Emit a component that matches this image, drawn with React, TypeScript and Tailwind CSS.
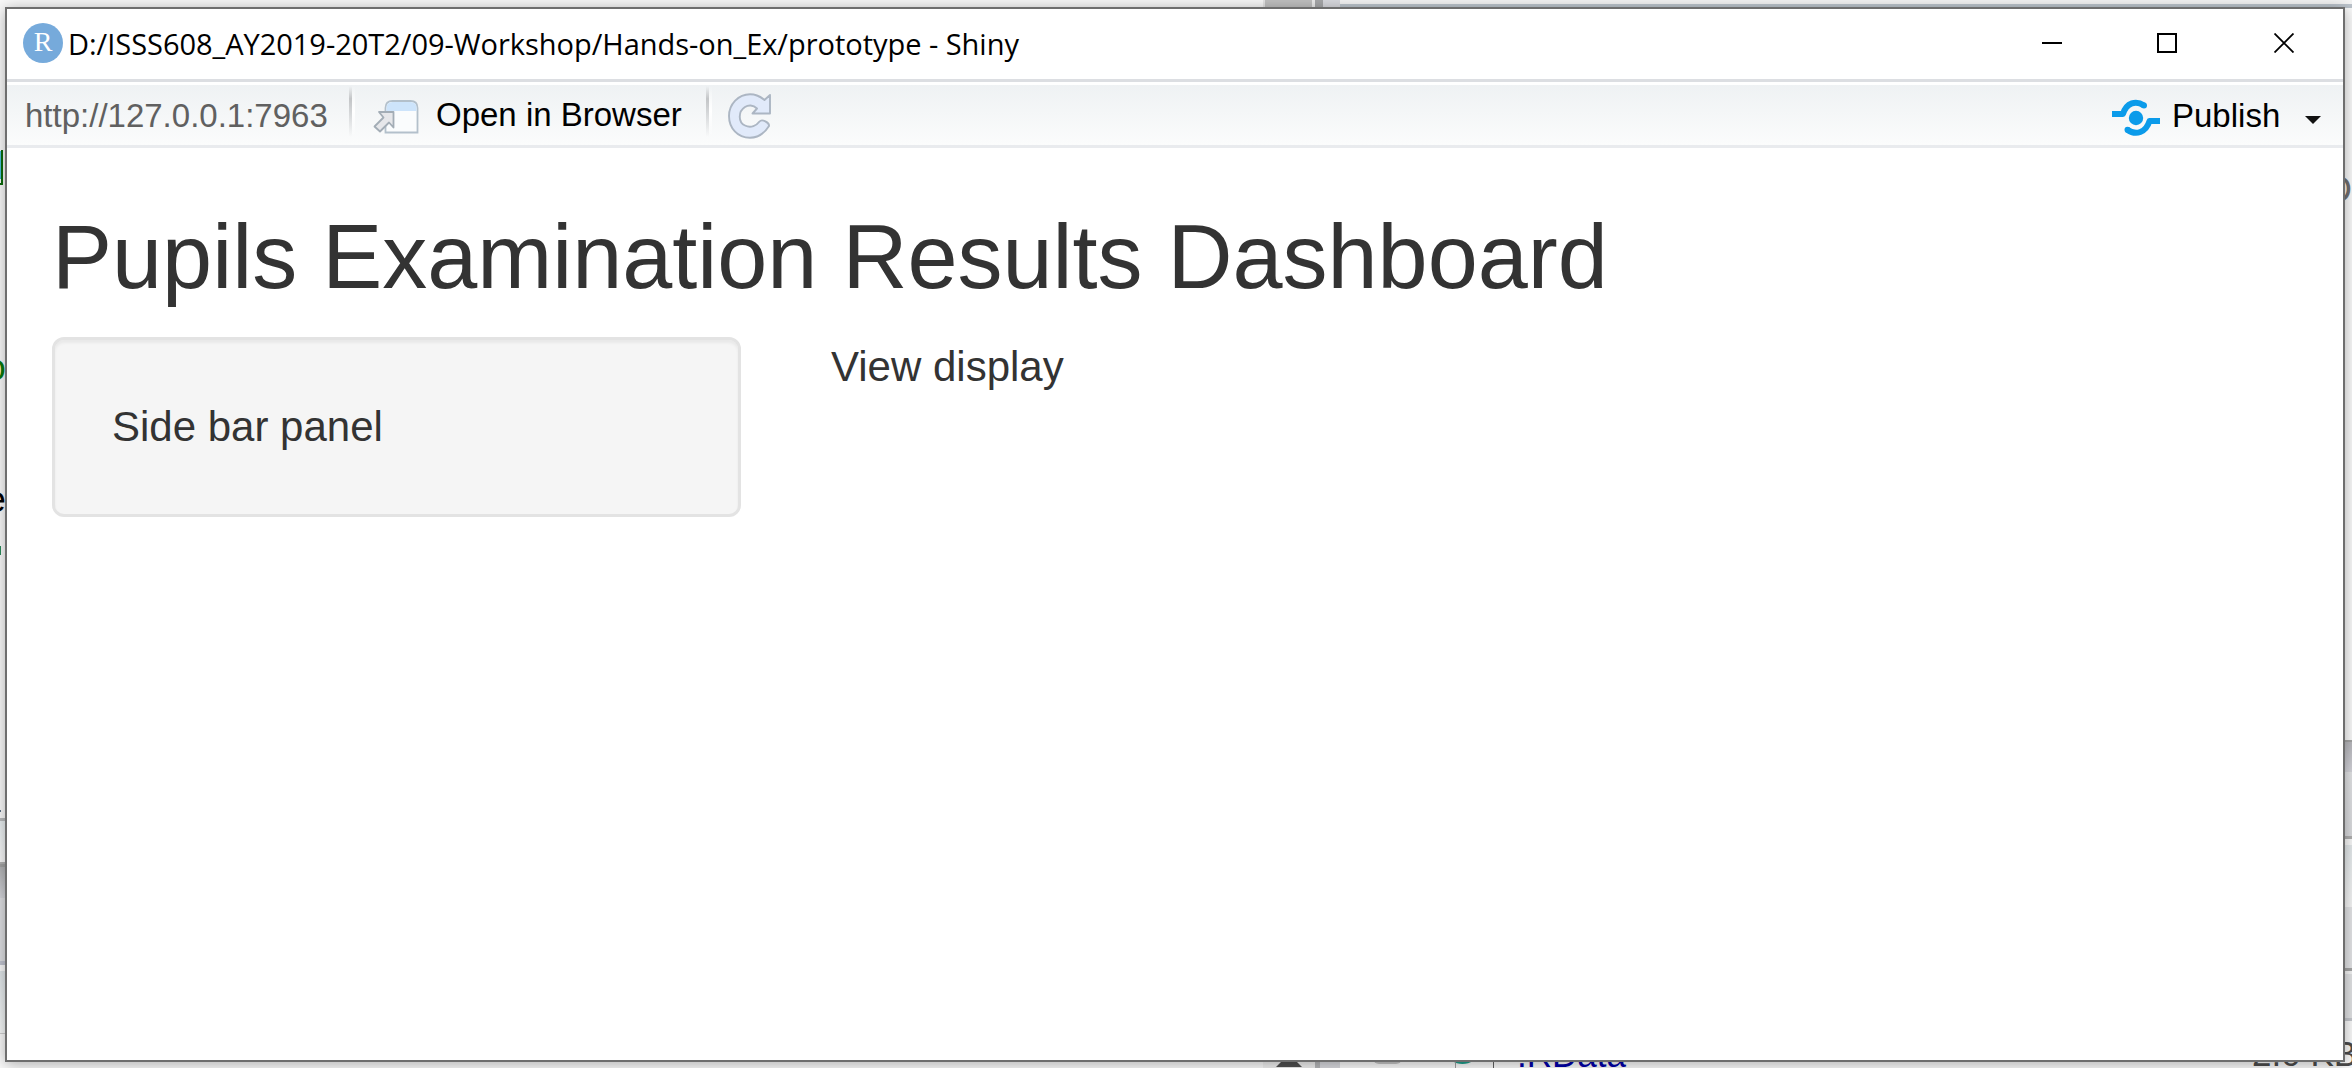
import React from 'react';

/* Parts of the editor that stay visible around the window */
function Backdrop() {
  return (
    <div className="absolute inset-0 overflow-hidden bg-[#fafafa]" aria-hidden="true">
      {/* top edge */}
      <div className="absolute left-0 top-0 flex h-[9px] w-full">
        <div className="w-[1263px] bg-[#f8f8f8]" />
        <div className="w-[2px] bg-[#e4e4e4]" />
        <div className="w-[47px] bg-[#c0c0c0]" />
        <div className="w-[3px] bg-[#ececec]" />
        <div className="w-[8px] bg-[#a6a7a9]" />
        <div className="w-[17px] bg-[#d8d9de]" />
        <div className="h-2 flex-1 border-b-[4px] border-[#bcc4cc] bg-[#f4f4f4]" />
      </div>

      {/* left edge */}
      <div className="absolute left-0 top-[818px] flex w-5 flex-col">
        <div className="h-[3px] bg-[#b9bbbd]" />
        <div className="h-[41px] bg-gradient-to-b from-[#e8eef0] to-[#fafafa]" />
        <div className="h-[2px] bg-[#b4b4b4]" />
        <div className="h-[3px] bg-[#a2a2a2]" />
        <div className="h-[31px] bg-gradient-to-b from-[#b2b3b5] to-[#d4d5da]" />
        <div className="h-[63px] bg-[#dedfe2]" />
        <div className="h-[4px] bg-[#c1c4d0]" />
        <div className="h-[6px] bg-[#fafafa]" />
        <div className="h-[62px] bg-gradient-to-b from-[#dfe5e8] to-[#f6f8f8]" />
        <div className="h-px bg-[#cfcfcf]" />
      </div>
      <div className="absolute -left-[19px] top-[144px] font-['Liberation_Mono',monospace] text-[38px] leading-[50px] text-[#0a6a0a]">d</div>
      <div className="absolute left-0 top-[150px] h-[35px] w-[3px] border-b-2 border-r-2 border-[#0a6a0a]" />
      <div className="absolute -left-[15px] top-[346px] font-['Liberation_Mono',monospace] text-[36px] leading-[50px] text-[#0a7a0a]">o</div>
      <div className="absolute -left-[15px] top-[478px] font-['Liberation_Mono',monospace] text-[36px] leading-[50px] text-black">e</div>
      <div className="absolute left-0 top-[546px] h-[9px] w-px bg-[#2a8a5a]" />
      <div className="absolute left-0 top-[810px] h-[2px] w-px bg-[#5f7186]" />

      {/* right edge */}
      <div className="absolute right-0 top-[740px] flex w-5 flex-col">
        <div className="h-[2px] bg-[#a5a5a5]" />
        <div className="h-[30px] bg-gradient-to-b from-[#b8b8bd] to-[#d4d4da]" />
        <div className="h-[64px] bg-gradient-to-b from-[#e2e3e5] to-[#dadbde]" />
        <div className="h-[3px] bg-[#b0b0b0]" />
        <div className="h-[6px] bg-[#f8f8f8]" />
        <div className="h-[62px] bg-gradient-to-b from-[#e3e8ea] to-[#f6f6f6]" />
        <div className="h-[61px] bg-[#e3e4e6]" />
        <div className="h-[3px] bg-[#a5a5a5]" />
        <div className="h-[3px] bg-[#f4f4f4]" />
        <div className="h-[44px] bg-[#e1e2e4]" />
        <div className="h-[3px] bg-[#c5c7cc]" />
      </div>
      <div className="absolute right-0 top-[165px] text-[37px] leading-[50px] text-[#707070]">D</div>

      {/* bottom edge */}
      <div className="absolute bottom-0 left-[1263px] flex h-2">
        <div className="w-[52px] bg-[#efefef]" />
        <div className="w-[5px] bg-[#b5b6b8]" />
        <div className="w-[20px] bg-[#d8d9de]" />
      </div>
      <svg className="absolute left-[1276px] top-[1055px]" width="26" height="12" viewBox="0 0 26 12">
        <path d="M0 12L13 -1L26 12Z" fill="#505050" />
      </svg>
      <div className="absolute left-[1373px] top-[1050px] h-[14px] w-[29px] rounded-md bg-[#c4c4c4]" />
      <div className="absolute left-[1448px] top-[1044px] h-5 w-[29px] rounded-[50%] bg-[#1ea08c]" />
      <div className="absolute left-[1455px] top-[1060px] h-2 w-px bg-[#a0a0a0]" />
      <div className="absolute left-[1493px] top-[1060px] h-2 w-px bg-[#606060]" />
      <div className="absolute left-[1517px] top-[1036px] text-[35px] leading-[38px] text-[#0000a8]">.RData</div>
      <div className="absolute left-[2252px] top-[1035px] whitespace-nowrap text-[35px] leading-[38px] text-[#4c4c4c]">2.0 KB</div>
    </div>
  );
}

function Separator() {
  return (
    <div className="mt-1 flex h-[51px] w-[6px]">
      <div className="w-[3px] bg-gradient-to-b from-transparent from-0% via-[#c3c5c7] via-25% to-transparent to-100%" />
      <div className="w-[3px] bg-gradient-to-b from-transparent via-white to-transparent" />
    </div>
  );
}

function OpenIcon() {
  return (
    <svg width="46" height="36" viewBox="0 0 46 36" className="block">
      <path d="M12.500 33.500V9Q12.500 2 19.500 2H37.500Q44.500 2 44.500 9V33.500Z" fill="#fafcfd" stroke="#b3c0cb" strokeWidth="1.800" />
      <path d="M13.500 12V9Q13.500 3 19.500 3H37.500Q43.500 3 43.500 9V12Z" fill="#cde4fb" />
      <path d="M6 13H20.500V28.500L16 23.500L7 32.500L1.500 27.500L10.500 18.500Z" fill="#e6e7ea" stroke="#a3adb6" strokeWidth="1.800" strokeLinejoin="round" />
    </svg>
  );
}

function RefreshIcon() {
  return (
    <svg width="44" height="46" viewBox="0 0 44 46" className="block">
      <path
        d="M42 2V20.500H24.500L29 15.500C25 11.500 20 12 17 14C10 18.500 10 29 17 32.500C23 35.500 28.500 32.500 31.500 28.500C34 25.500 41.500 29.500 41 33C36 41 29.500 44.800 22 44.800C9.500 44.800 1 35 1 23C1 11 10.500 1.200 22 1.200C28 1.200 32.500 3.500 36.500 7Z"
        fill="#e1eafa"
        stroke="#acb6c3"
        strokeWidth="1.900"
        strokeLinejoin="round"
      />
    </svg>
  );
}

function PublishIcon() {
  return (
    <svg width="48" height="38" viewBox="0 0 48 38" className="block" fill="none" stroke="#0b9bea" strokeWidth="6">
      <circle cx="24" cy="19" r="7.200" fill="#0b9bea" stroke="none" />
      <path d="M0 15H11C14.500 3.500 24 1 32 6.500" strokeLinejoin="round" />
      <path d="M48 22H37.500C34 33.500 24 37 15 30.500" strokeLinejoin="round" />
      <circle cx="32" cy="6.500" r="3" fill="#0b9bea" stroke="none" />
      <circle cx="15.500" cy="30.800" r="3" fill="#0b9bea" stroke="none" />
    </svg>
  );
}

function TitleBar() {
  return (
    <header className="flex h-[70px] shrink-0 items-center pb-[2px]">
      <span className="ml-4 flex size-10 items-center justify-center rounded-full bg-[#76aadb] pb-[2px] font-['Liberation_Serif',serif] text-[28px] leading-none text-white">
        R
      </span>
      <h1 className="ml-[5px] mt-[2px] whitespace-nowrap font-['Open_Sans',sans-serif] text-[29px] tracking-[-0.03px] text-black">
        D:/ISSS608_AY2019-20T2/09-Workshop/Hands-on_Ex/prototype - Shiny
      </h1>
      <div className="ml-auto mr-[49px] flex items-center">
        <svg width="20" height="20" viewBox="0 0 20 20" className="mr-[95px]">
          <path d="M0 10H20" stroke="#000" strokeWidth="2" />
        </svg>
        <svg width="20" height="20" viewBox="0 0 20 20" className="mr-[97px]">
          <path d="M1 1H19V19H1Z" fill="none" stroke="#000" strokeWidth="2" />
        </svg>
        <svg width="20" height="20" viewBox="0 0 20 20">
          <path d="M0.500 0.500L19.500 19.500M19.500 0.500L0.500 19.500" stroke="#000" strokeWidth="1.800" />
        </svg>
      </div>
    </header>
  );
}

function Toolbar() {
  return (
    <div className="flex h-[69px] shrink-0 items-start border-y-[3px] border-t-[#dcdee2] border-b-[#e9ebee] bg-gradient-to-b from-[#eef1f3] to-[#fbfcfc] text-[33px] leading-[38px] text-black shadow-[inset_0_3px_0_#fff]">
      <span className="ml-[18px] mt-[15px] w-[302px] whitespace-nowrap text-[#606060]">http://127.0.0.1:7963</span>
      <div className="ml-[22px] flex">
        <Separator />
      </div>
      <div className="ml-[18px] mt-[17px]">
        <OpenIcon />
      </div>
      <span className="ml-[17px] mt-[14px] w-[246px] whitespace-nowrap">Open in Browser</span>
      <div className="ml-6 flex">
        <Separator />
      </div>
      <div className="ml-4 mt-[11px]">
        <RefreshIcon />
      </div>
      <div className="ml-auto mt-[17px]">
        <PublishIcon />
      </div>
      <span className="ml-3 mt-[15px] w-[108px]">Publish</span>
      <svg width="16" height="8" viewBox="0 0 16 8" className="ml-[25px] mr-[22px] mt-[34px]">
        <path d="M0 0H16L8 8Z" fill="#111" />
      </svg>
    </div>
  );
}

export default function App() {
  return (
    <div className="relative h-[1068px] w-[2352px] overflow-hidden px-[5px] pt-[7px] font-['Liberation_Sans',Arial,sans-serif]">
      <Backdrop />
      <div className="relative flex h-[1055px] w-[2340px] flex-col border-2 border-[#6e6e6e] bg-white shadow-[0_2px_14px_rgba(0,0,0,0.32)]">
        <TitleBar />
        <Toolbar />
        <main className="px-[45px] text-[42px] leading-[60px] text-[#333]">
          <h2 className="mb-[30px] mt-[60px] text-[90px] leading-[99px]">Pupils Examination Results Dashboard</h2>
          <div className="flex gap-[90px]">
            <aside className="h-[180px] w-[689px] rounded-[12px] border-[3px] border-[#e3e3e3] bg-[#f5f5f5] p-[57px] shadow-[inset_0_3px_3px_rgba(0,0,0,0.05)]">
              Side bar panel
            </aside>
            <section>View display</section>
          </div>
        </main>
      </div>
    </div>
  );
}
